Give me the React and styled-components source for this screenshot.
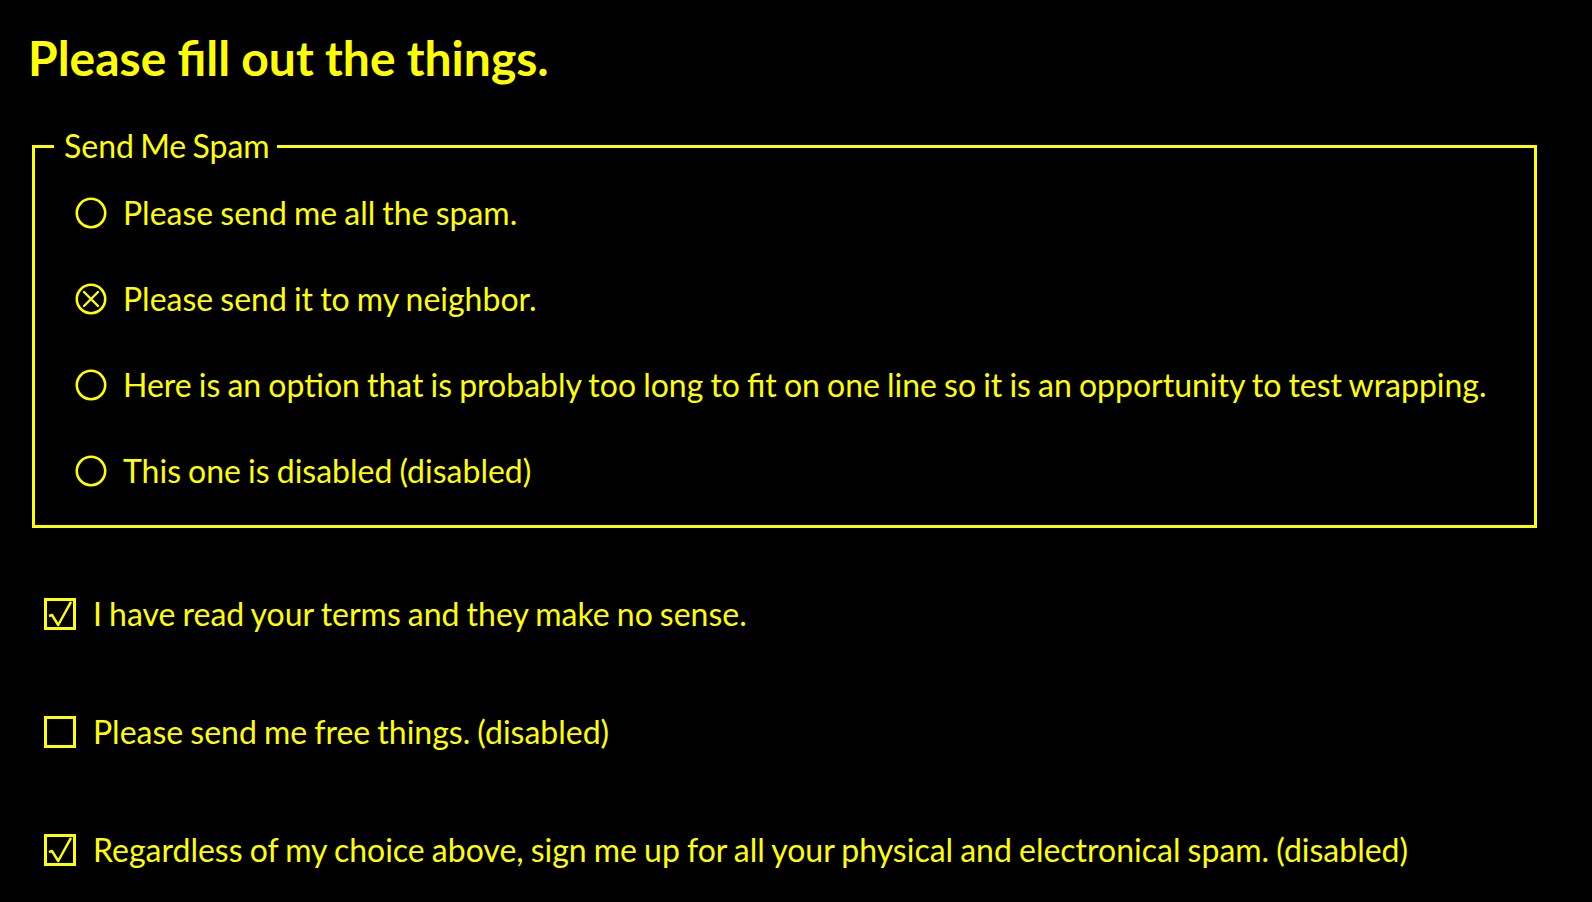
import styled, { createGlobalStyle } from 'styled-components';

const GlobalStyle = createGlobalStyle`
  html, body {
    margin: 0;
    padding: 0;
    background: #000;
  }
  body {
    color: #ffff00;
    font-family: Lato, "Noto Sans", sans-serif;
    font-size: 32px;
    word-spacing: -1.1px;
  }
`;

const Page = styled.main`
  padding: 30px 55px 0 28px;
`;

const Title = styled.h1`
  margin: 0 0 41px;
  font-size: 48px;
  line-height: 55px;
  font-weight: 700;
  word-spacing: -0.5px;
`;

const Group = styled.fieldset`
  margin: 0 0 0 4px;
  padding: 4px 20px 11px 40px;
  border: 3px solid #ffff00;
  min-width: 0;
`;

const Legend = styled.legend`
  padding: 0 7px 0 10px;
  margin-left: -21px;
  line-height: 40px;
  word-spacing: -2px;
`;

const Row = styled.label`
  display: flex;
  align-items: center;
  gap: ${props => props.gap}px;
  height: ${props => props.height}px;
  line-height: 1.2;
`;

const Checks = styled.div`
  margin-top: 27px;
  padding-left: 16px;
`;

const Mark = styled.svg`
  flex: none;
  width: 32px;
  height: 32px;
  display: block;
`;

const Radio = ({ checked }) => (
  <Mark viewBox="0 0 32 32">
    <circle cx="16" cy="16" r="14.2" fill="none" stroke="#ffff00" strokeWidth="2.6" />
    {checked && (
      <path d="M9 9 L23 23 M23 9 L9 23" stroke="#ffff00" strokeWidth="2.4" strokeLinecap="round" fill="none" />
    )}
  </Mark>
);

const Checkbox = ({ checked }) => (
  <Mark viewBox="0 0 32 32">
    <rect x="1.5" y="1.5" width="29" height="29" fill="none" stroke="#ffff00" strokeWidth="3" />
    {checked && (
      <path d="M5 18 L8 17 L14.2 27 L27 3.8" stroke="#ffff00" strokeWidth="2.4" strokeLinejoin="round" fill="none" />
    )}
  </Mark>
);

const radios = [
  { text: 'Please send me all the spam.', checked: false },
  { text: 'Please send it to my neighbor.', checked: true },
  { text: 'Here is an option that is probably too long to fit on one line so it is an opportunity to test wrapping.', checked: false },
  { text: 'This one is disabled (disabled)', checked: false },
];

const boxes = [
  { text: 'I have read your terms and they make no sense.', checked: true },
  { text: 'Please send me free things. (disabled)', checked: false },
  { text: 'Regardless of my choice above, sign me up for all your physical and electronical spam. (disabled)', checked: true },
];

export default function App() {
  return (
    <>
      <GlobalStyle />
      <Page>
        <Title>Please fill out the things.</Title>
        <Group>
          <Legend>Send Me Spam</Legend>
          {radios.map(r => (
            <Row key={r.text} height={86} gap={16}>
              <Radio checked={r.checked} />
              <span>{r.text}</span>
            </Row>
          ))}
        </Group>
        <Checks>
          {boxes.map(b => (
            <Row key={b.text} height={118} gap={17}>
              <Checkbox checked={b.checked} />
              <span>{b.text}</span>
            </Row>
          ))}
        </Checks>
      </Page>
    </>
  );
}
